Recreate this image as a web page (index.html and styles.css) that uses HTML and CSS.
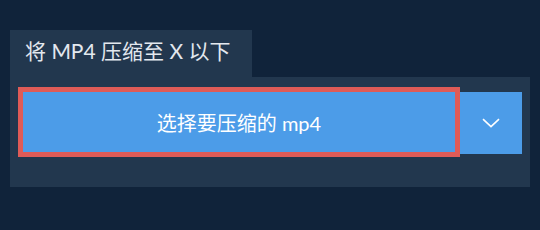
FILE: index.html
```html
<!DOCTYPE html>
<html lang="zh-CN">
<head>
  <meta charset="UTF-8">
  <meta name="viewport" content="width=device-width, initial-scale=1.0">
  <title>压缩 MP4</title>
  <link rel="stylesheet" href="styles.css">
</head>
<body>
  <div class="compress-box">
    <div class="tab">将 MP4 压缩至 X 以下</div>
    <div class="panel">
      <button type="button" class="pick-file">选择要压缩的 mp4</button>
      <button type="button" class="pick-more" aria-label="更多">
        <svg width="18" height="10" viewBox="0 0 18 10">
          <path d="M1 1.2 L9 8.6 L17 1.2" fill="none" stroke="#fff" stroke-width="1.6"/>
        </svg>
      </button>
    </div>
  </div>
</body>
</html>
```

FILE: styles.css
```css
body {
  margin: 0;
  padding: 0;
  background: #10233a;
  font-family: "Lato", "Noto Sans CJK SC", sans-serif;
}

.compress-box {
  padding: 30px 10px 0 10px;
}

.tab {
  display: inline-block;
  width: 242px;
  height: 47px;
  box-sizing: border-box;
  padding: 6px 0 0 15px;
  background: #22374e;
  color: #e3e8ee;
  font-size: 21px;
  line-height: 29px;
}

.panel {
  display: flex;
  align-items: center;
  background: #22374e;
  padding: 10px 8px 30px 8px;
}

button {
  border: none;
  background: #4c9ce8;
  color: #fff;
  font-family: inherit;
  cursor: pointer;
}

.pick-file {
  flex: 1;
  height: 70px;
  border: 5px solid #df5b57;
  font-size: 20px;
}

.pick-more {
  width: 62px;
  height: 62px;
  display: flex;
  align-items: center;
  justify-content: center;
  padding: 0;
  margin-top: 2px;
}
```
